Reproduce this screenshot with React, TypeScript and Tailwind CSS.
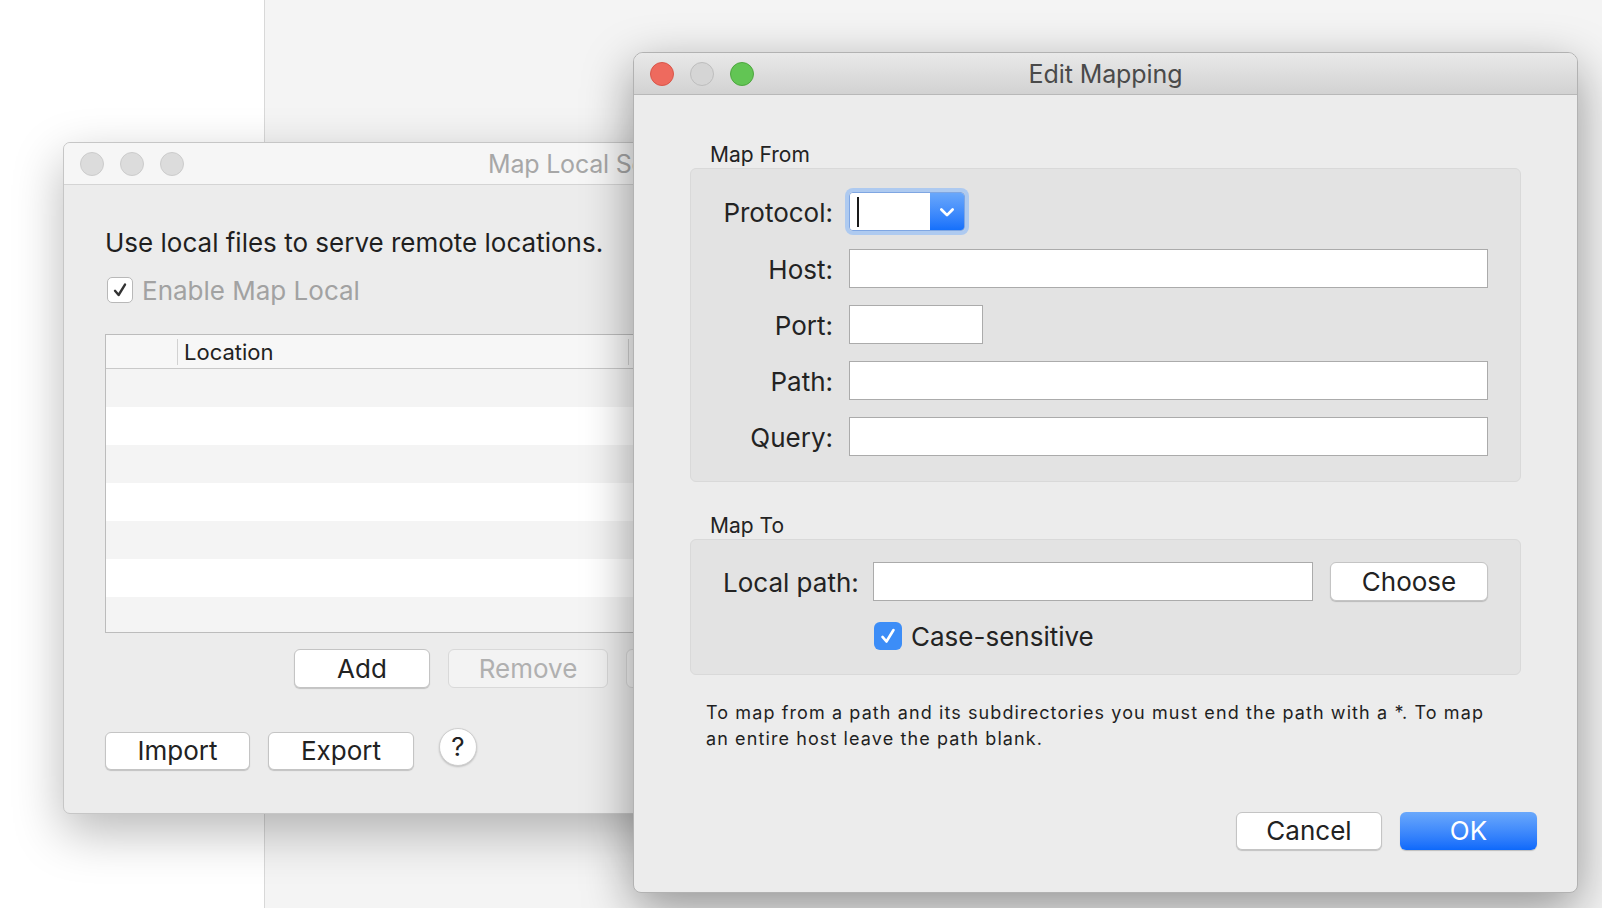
import React from 'react';

const font = "font-['Inter','Liberation_Sans',sans-serif]";

const Lights = ({ active }: { active: boolean }) => (
  <div className="flex items-center gap-[16px] pl-[16px]">
    <span className={`h-[24px] w-[24px] rounded-full border ${active ? 'border-[#d8564a] bg-[#ee6a5e]' : 'border-[#cccccc] bg-[#dcdcdc]'}`} />
    <span className={`h-[24px] w-[24px] rounded-full border ${active ? 'border-[#bdbdbd] bg-[#d5d5d5]' : 'border-[#cccccc] bg-[#dcdcdc]'}`} />
    <span className={`h-[24px] w-[24px] rounded-full border ${active ? 'border-[#4ea63f] bg-[#62c554]' : 'border-[#cccccc] bg-[#dcdcdc]'}`} />
  </div>
);

const MacButton = ({
  children,
  className = '',
  disabled = false,
}: {
  children: React.ReactNode;
  className?: string;
  disabled?: boolean;
}) => (
  <button
    className={`flex shrink-0 items-center justify-center rounded-[6px] border text-[26px] leading-none ${
      disabled
        ? 'border-[#d9d9d9] bg-[#f3f3f3] text-[#b0b0b0]'
        : 'border-[#c4c4c4] bg-white text-[#222222] shadow-[0_1px_1px_rgba(0,0,0,0.18)]'
    } ${className}`}
  >
    {children}
  </button>
);

const Field = ({ className = '' }: { className?: string }) => (
  <input type="text" readOnly className={`h-[39px] border border-[#ababab] bg-white outline-none ${className}`} />
);

const Check = ({ className = '' }: { className?: string }) => (
  <svg viewBox="0 0 20 20" className={className} fill="none" stroke="currentColor" strokeWidth={2.4} strokeLinecap="round" strokeLinejoin="round">
    <path d="M5 10.8 L8.6 15 L15 4.6" />
  </svg>
);

const MapLocalWindow = () => (
  <div className="absolute left-[63px] top-[142px] flex h-[672px] w-[1090px] flex-col overflow-hidden rounded-[7px] border border-[#c6c6c6] bg-[#ececec] shadow-[0_18px_50px_rgba(0,0,0,0.28)]">
    <div className="flex h-[42px] shrink-0 items-center border-b border-[#d4d4d4] bg-[#f6f6f6]">
      <Lights active={false} />
      <div className="ml-[304px] pt-[2px] text-[25px] tracking-[-0.2px] text-[#a7a7a7]">Map Local Settings</div>
    </div>
    <div className="flex flex-col pl-[41px] pt-[43px]">
      <div className="text-[26px] leading-[30px] text-[#1f1f1f]">Use local files to serve remote locations.</div>
      <div className="mt-[19px] flex h-[26px] items-center">
        <span className="ml-[2px] flex h-[26px] w-[26px] items-center justify-center rounded-[5px] border border-[#b8b8b8] bg-white text-[#333333]">
          <Check className="h-[20px] w-[20px]" />
        </span>
        <span className="ml-[9px] pt-[2px] text-[26px] leading-none text-[#a2a2a2]">Enable Map Local</span>
      </div>

      <div className="mt-[31px] w-[940px] border border-[#bcbcbc]">
        <div className="flex h-[34px] items-center border-b border-[#c9c9c9] bg-[#f7f7f7]">
          <div className="w-[71px]" />
          <span className="h-[26px] w-px bg-[#d2d2d2]" />
          <div className="w-[450px] pl-[6px] text-[22px] leading-none text-[#222222]">Location</div>
          <span className="h-[26px] w-px bg-[#d2d2d2]" />
        </div>
        <div className="h-[38px] bg-[#f4f4f4]" />
        <div className="h-[38px] bg-white" />
        <div className="h-[38px] bg-[#f4f4f4]" />
        <div className="h-[38px] bg-white" />
        <div className="h-[38px] bg-[#f4f4f4]" />
        <div className="h-[38px] bg-white" />
        <div className="h-[35px] bg-[#f4f4f4]" />
      </div>

      <div className="mt-[16px] flex">
        <MacButton className="ml-[189px] h-[39px] w-[136px]">Add</MacButton>
        <MacButton disabled className="ml-[18px] h-[39px] w-[160px]">Remove</MacButton>
        <MacButton disabled className="ml-[18px] h-[39px] w-[136px]">Edit</MacButton>
      </div>

      <div className="mt-[44px] flex items-start">
        <MacButton className="h-[38px] w-[145px]">Import</MacButton>
        <MacButton className="ml-[18px] h-[38px] w-[146px]">Export</MacButton>
        <button className="-mt-[4px] ml-[25px] flex h-[38px] w-[38px] items-center justify-center rounded-full border border-[#cfcfcf] bg-white text-[26px] leading-none text-[#222222] shadow-[0_1px_2px_rgba(0,0,0,0.2)]">
          ?
        </button>
      </div>
    </div>
  </div>
);

const EditMappingWindow = () => (
  <div className="absolute left-[633px] top-[52px] flex h-[841px] w-[945px] flex-col overflow-hidden rounded-t-[10px] rounded-b-[8px] border border-[#b2b2b2] bg-[#ececec] shadow-[0_16px_50px_rgba(0,0,0,0.4)]">
    <div className="grid h-[42px] shrink-0 grid-cols-[1fr_auto_1fr] items-center border-b border-[#b8b8b8] bg-gradient-to-b from-[#e9e9e9] to-[#d2d2d2]">
      <Lights active />
      <div className="pt-[2px] text-[25px] tracking-[-0.1px] text-[#4a4a4a]">Edit Mapping</div>
      <div />
    </div>

    <div className="flex flex-1 flex-col">
      <div className="px-[56px] pt-[47px] text-[#232323]">
        <div className="mb-[2px] h-[24px] pl-[20px] pt-[1px] text-[21px] leading-[24px]">Map From</div>
        <div className="grid grid-cols-[142px_1fr] items-center gap-x-[16px] gap-y-[17px] rounded-[6px] border border-[#d9d9d9] bg-[#e3e3e3] pb-[25px] pr-[32px] pt-[23px]">
          <div className="h-[40px] pt-[6px] text-right text-[26px] leading-[30px]">Protocol:</div>
          <div className="h-[40px]">
            <div className="flex h-[39px] w-[116px] overflow-hidden rounded-[4px] border border-[#7fa6e2] shadow-[0_0_0_4px_#aecaf0]">
              <div className="flex flex-1 items-center bg-white pl-[7px]">
                <span className="h-[30px] w-[2px] bg-[#1a1a1a]" />
              </div>
              <div className="flex w-[34px] items-center justify-center bg-gradient-to-b from-[#69a7fb] to-[#1470fb]">
                <svg viewBox="0 0 16 16" className="h-[20px] w-[20px]" fill="none" stroke="white" strokeWidth={2.2} strokeLinecap="round" strokeLinejoin="round">
                  <polyline points="3.5,6 8,10.5 12.5,6" />
                </svg>
              </div>
            </div>
          </div>

          <div className="pt-[3px] text-right text-[26px] leading-[30px]">Host:</div>
          <Field className="w-full" />

          <div className="pt-[3px] text-right text-[26px] leading-[30px]">Port:</div>
          <Field className="w-[134px]" />

          <div className="pt-[3px] text-right text-[26px] leading-[30px]">Path:</div>
          <Field className="w-full" />

          <div className="pt-[3px] text-right text-[26px] leading-[30px]">Query:</div>
          <Field className="w-full" />
        </div>

        <div className="mb-[2px] mt-[31px] h-[24px] pl-[20px] pt-[1px] text-[21px] leading-[24px]">Map To</div>
        <div className="rounded-[6px] border border-[#d9d9d9] bg-[#e3e3e3] pb-[24px] pl-[32px] pr-[32px] pt-[22px]">
          <div className="flex h-[39px] items-center">
            <div className="w-[134px] shrink-0 whitespace-nowrap pt-[3px] text-[26px] leading-[30px]">Local path:</div>
            <Field className="ml-[16px] min-w-0 flex-1" />
            <MacButton className="ml-[17px] h-[39px] w-[158px]">Choose</MacButton>
          </div>
          <div className="mt-[21px] flex h-[28px] items-center pl-[151px]">
            <span className="flex h-[28px] w-[28px] items-center justify-center rounded-[6px] bg-[#3c8df7] text-white">
              <Check className="h-[22px] w-[22px]" />
            </span>
            <span className="ml-[9px] pt-[2px] text-[26px] leading-none">Case-sensitive</span>
          </div>
        </div>

        <p className="mt-[25px] whitespace-nowrap pl-[16px] text-[18px] leading-[26px] tracking-[1.1px] text-[#1f1f1f]">
          To map from a path and its subdirectories you must end the path with a *. To map
          <br />
          an entire host leave the path blank.
        </p>
      </div>

      <div className="mt-auto flex justify-end gap-[18px] pb-[42px] pr-[40px]">
        <MacButton className="h-[38px] w-[146px]">Cancel</MacButton>
        <button className="flex h-[38px] w-[137px] items-center justify-center rounded-[6px] bg-gradient-to-b from-[#6aa8fb] to-[#0c69fb] text-[26px] leading-none text-white shadow-[0_1px_1px_rgba(0,0,0,0.2)]">
          OK
        </button>
      </div>
    </div>
  </div>
);

export default function App() {
  return (
    <div className={`relative h-[908px] w-[1602px] overflow-hidden ${font}`}>
      <div className="flex h-full">
        <div className="w-[264px] bg-white" />
        <div className="w-px bg-[#d8d8d8]" />
        <div className="flex-1 bg-[#f4f4f4]" />
      </div>
      <MapLocalWindow />
      <EditMappingWindow />
    </div>
  );
}
